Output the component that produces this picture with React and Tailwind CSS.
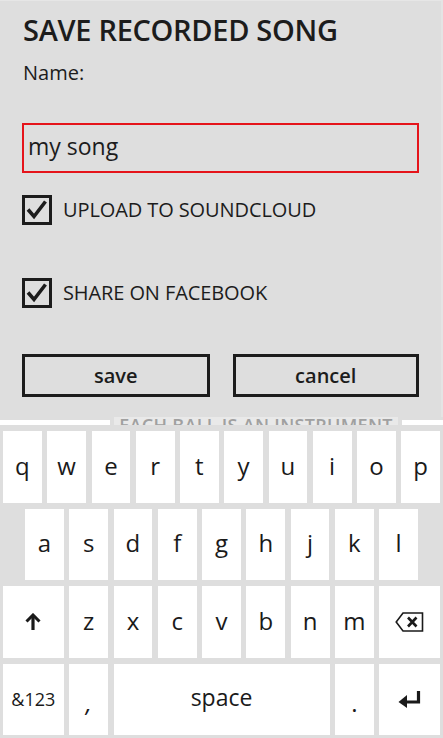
import React from 'react';

const font = "font-['Open_Sans','Noto_Sans',sans-serif]";

const CheckBox = ({ label }) => (
  <div className="flex items-center h-[30px]">
    <div className="w-[30px] h-[30px] border-[3px] border-[#1c1c1c] flex items-center justify-center">
      <svg width="24" height="24" viewBox="0 0 24 24">
        <path d="M3 11.5 L9 18.5 L20.5 3.5" fill="none" stroke="#1c1c1c" strokeWidth="3.6" />
      </svg>
    </div>
    <span className="ml-[11px] text-[20px] leading-none text-[#1c1c1c] tracking-[-0.1px]">{label}</span>
  </div>
);

const Key = ({ children, className = '' }) => (
  <div className={`bg-white flex items-center justify-center text-[#1a1a1a] ${className}`}>
    {children}
  </div>
);

const ShiftIcon = () => (
  <svg width="16" height="18" viewBox="0 0 16 18">
    <path d="M8 17 L8 3" stroke="#1a1a1a" strokeWidth="3.2" />
    <path d="M1.5 8.5 L8 2 L14.5 8.5" fill="none" stroke="#1a1a1a" strokeWidth="3" />
  </svg>
);

const BackspaceIcon = () => (
  <svg width="29" height="20" viewBox="0 0 29 20">
    <path d="M8 1 L27.5 1 L27.5 19 L8 19 L1.2 10 Z" fill="none" stroke="#1a1a1a" strokeWidth="1.6" />
    <path d="M13 5.5 L21.5 14.5 M21.5 5.5 L13 14.5" stroke="#1a1a1a" strokeWidth="2.6" />
  </svg>
);

const EnterIcon = () => (
  <svg width="23" height="17" viewBox="0 0 23 17">
    <path d="M20.5 0 L20.5 11 L7 11" fill="none" stroke="#1a1a1a" strokeWidth="3.2" />
    <path d="M0.5 11 L9 4 L9 17 Z" fill="#1a1a1a" />
  </svg>
);

const letter = 'flex-1 text-[24px] leading-none pb-[2px]';
const fixed = 'w-[38.8px] shrink-0 text-[24px] leading-none pb-[2px]';

export default function App() {
  return (
    <div className={`w-[443px] h-[738px] overflow-hidden bg-[#dedede] ${font}`}>
      {/* dialog */}
      <div className="h-[417px] border-t border-[#e6e6e6] border-r-[2px] border-r-[#e4e4e4] px-[22px] pt-[9px]">
        <h1 className="text-[29px] font-semibold leading-[40px] text-[#1c1c1c] tracking-[-0.3px] ml-px">
          SAVE RECORDED SONG
        </h1>
        <div className="text-[20px] leading-[28px] text-[#1c1c1c] mt-[9px] ml-px">Name:</div>
        <div className="mt-[36px] h-[50px] w-[397px] border-2 border-[#e5141b] flex items-center pl-[4px]">
          <span className="text-[23px] leading-none text-[#1c1c1c] pb-[3px]">my song</span>
        </div>
        <div className="mt-[22px]">
          <CheckBox label="UPLOAD TO SOUNDCLOUD" />
        </div>
        <div className="mt-[53px]">
          <CheckBox label="SHARE ON FACEBOOK" />
        </div>
        <div className="mt-[46px] flex gap-[23px]">
          <button className="w-[188px] h-[43px] border-[3px] border-[#1c1c1c] text-[20px] font-semibold text-[#1c1c1c] leading-none">
            save
          </button>
          <button className="w-[187px] h-[43px] border-[3px] border-[#1c1c1c] text-[20px] font-semibold text-[#1c1c1c] leading-none">
            cancel
          </button>
        </div>
      </div>

      {/* page content peeking behind the dialog */}
      <div className="h-[8px] flex">
        <div className="w-[110px] pt-[3px]"><div className="h-full bg-white" /></div>
        <div className="w-[4px]" />
        <div className="w-[284px] bg-[#e9e9e9] overflow-hidden flex justify-center">
          <span className="text-[18px] font-semibold text-[#a0a0a0] leading-none mt-[-1px] tracking-[0.3px] whitespace-nowrap">
            EACH BALL IS AN INSTRUMENT
          </span>
        </div>
        <div className="w-[4px]" />
        <div className="flex-1 pt-[3px]"><div className="h-full bg-white" /></div>
      </div>

      {/* keyboard */}
      <div className="h-[313px] bg-[#dedede] pt-[6px] pl-[3px] pr-[3px] flex flex-col gap-[6px]">
        <div className="h-[71.5px] flex gap-[5.5px]">
          {['q', 'w', 'e', 'r', 't', 'y', 'u', 'i', 'o', 'p'].map((k) => (
            <Key key={k} className={letter}>{k}</Key>
          ))}
        </div>
        <div className="h-[71.5px] flex gap-[5.5px] px-[22px]">
          {['a', 's', 'd', 'f', 'g', 'h', 'j', 'k', 'l'].map((k) => (
            <Key key={k} className={letter}>{k}</Key>
          ))}
        </div>
        <div className="h-[71.5px] flex gap-[5.5px]">
          <Key className="flex-1"><ShiftIcon /></Key>
          {['z', 'x', 'c', 'v', 'b', 'n', 'm'].map((k) => (
            <Key key={k} className={fixed}>{k}</Key>
          ))}
          <Key className="flex-1"><BackspaceIcon /></Key>
        </div>
        <div className="h-[71.5px] flex gap-[5.5px]">
          <Key className="flex-1 text-[18px] leading-none">&amp;123</Key>
          <Key className={`${fixed} items-end pb-[20px]`}>
            <span className="text-[24px] leading-none italic">,</span>
          </Key>
          <Key className="w-[216px] shrink-0 text-[23px] leading-none pb-[4px]">space</Key>
          <Key className={`${fixed} items-end pb-[20px]`}>
            <span className="text-[24px] leading-none">.</span>
          </Key>
          <Key className="flex-1"><EnterIcon /></Key>
        </div>
      </div>
    </div>
  );
}
